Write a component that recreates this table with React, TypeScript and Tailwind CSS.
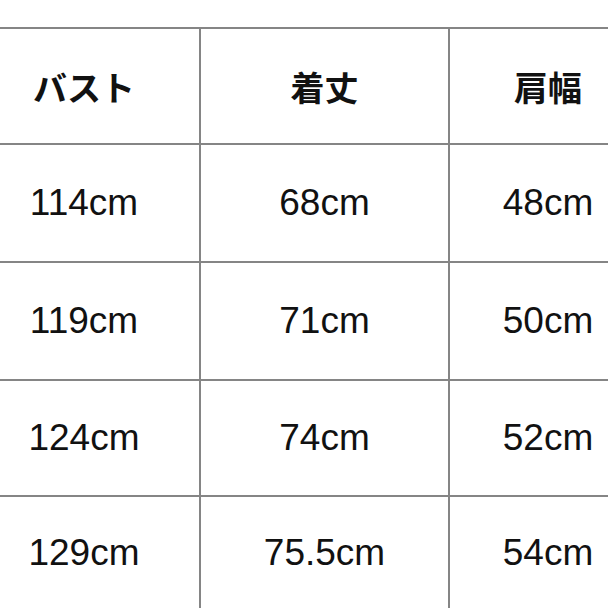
const headers = ['バスト', '着丈', '肩幅'];

const rows = [
  ['114cm', '68cm', '48cm'],
  ['119cm', '71cm', '50cm'],
  ['124cm', '74cm', '52cm'],
  ['129cm', '75.5cm', '54cm'],
];

const heights = ['h-[118px]', 'h-[118px]', 'h-[116px]', 'h-[111px]'];

export default function App() {
  return (
    <div className="w-[608px] h-[608px] overflow-hidden bg-white pt-[27px]">
      <div className="ml-[-31px] grid w-[679px] grid-cols-[232px_249px_198px] border-t-2 border-[#858585]">
        {headers.map((h) => (
          <div
            key={h}
            className="flex h-[116px] items-center justify-center border-b-2 border-r-2 border-[#858585] font-['Noto_Sans_CJK_JP',sans-serif] text-[34px] font-bold text-[#111]"
          >
            {h}
          </div>
        ))}
        {rows.map((row, i) =>
          row.map((cell, j) => (
            <div
              key={`${i}-${j}`}
              className={`flex ${heights[i]} items-center justify-center border-r-2 border-[#858585] ${i < rows.length - 1 ? 'border-b-2' : ''} font-['Liberation_Sans',Arial,sans-serif] text-[37px] text-[#111]`}
            >
              {cell}
            </div>
          ))
        )}
      </div>
    </div>
  );
}
